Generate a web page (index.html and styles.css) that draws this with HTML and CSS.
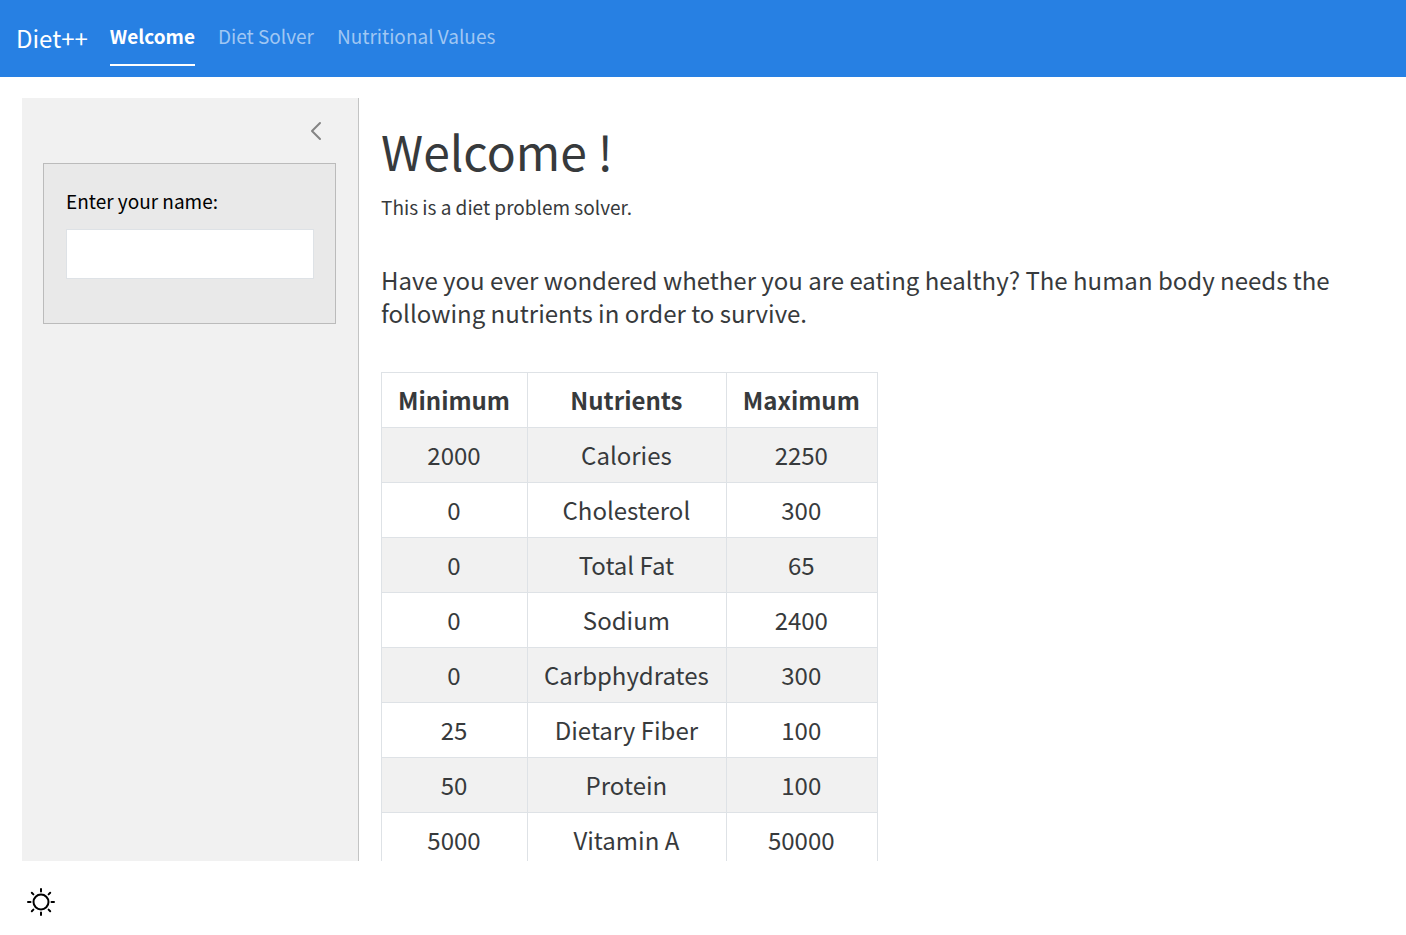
FILE: index.html
```html
<!DOCTYPE html>
<html lang="en">
<head>
<meta charset="utf-8">
<title>Diet++</title>
<link rel="stylesheet" href="styles.css">
</head>
<body>
<header class="navbar">
  <a class="brand" href="#">Diet++</a>
  <nav class="nav">
    <a class="nav-link active" href="#welcome">Welcome</a>
    <a class="nav-link" href="#solver">Diet Solver</a>
    <a class="nav-link" href="#values">Nutritional Values</a>
  </nav>
</header>
<div class="layout">
  <aside class="sidebar">
    <button class="collapse" type="button" aria-label="Toggle sidebar">
      <svg width="22" height="22" viewBox="0 0 22 22" fill="none" stroke="currentColor" stroke-width="2" stroke-linecap="round" stroke-linejoin="round"><path d="M15 3 7 11l8 8"/></svg>
    </button>
    <form class="well">
      <label for="name">Enter your name:</label>
      <input id="name" type="text">
    </form>
  </aside>
  <main class="main">
    <h1>Welcome !</h1>
    <p class="intro">This is a diet problem solver.</p>
    <p class="lead">Have you ever wondered whether you are eating healthy? The human body needs the following nutrients in order to survive.</p>
    <table>
      <thead><tr><th>Minimum</th><th>Nutrients</th><th>Maximum</th></tr></thead>
      <tbody>
        <tr><td>2000</td><td>Calories</td><td>2250</td></tr>
        <tr><td>0</td><td>Cholesterol</td><td>300</td></tr>
        <tr><td>0</td><td>Total Fat</td><td>65</td></tr>
        <tr><td>0</td><td>Sodium</td><td>2400</td></tr>
        <tr><td>0</td><td>Carbphydrates</td><td>300</td></tr>
        <tr><td>25</td><td>Dietary Fiber</td><td>100</td></tr>
        <tr><td>50</td><td>Protein</td><td>100</td></tr>
        <tr><td>5000</td><td>Vitamin A</td><td>50000</td></tr>
      </tbody>
    </table>
  </main>
</div>
<footer class="footer">
  <button class="mode" type="button" aria-label="Toggle dark mode">
    <svg width="32" height="32" viewBox="0 0 32 32" fill="none" stroke="currentColor" stroke-width="2" stroke-linecap="round"><circle cx="16" cy="16" r="7.500"/><path d="M16 3v2.500M16 26.500v2.500M3 16h2.500M26.500 16h2.500M6.800 6.800l1.600 1.600M23.600 23.600l1.600 1.600M25.200 6.800l-1.600 1.600M8.400 23.600l-1.600 1.600"/></svg>
  </button>
</footer>
</body>
</html>
```
FILE: styles.css
```css
* { box-sizing: border-box; }
body {
  margin: 0;
  height: 100vh;
  display: flex;
  flex-direction: column;
  background: #fff;
  color: #373a3c;
  font-family: "Noto Sans CJK SC", "Noto Sans", sans-serif;
  font-size: 19px;
  line-height: 28px;
}
.navbar {
  display: flex;
  align-items: center;
  gap: 22px;
  padding: 0 16px 2px;
  height: 77px;
  flex: none;
  background: #2780e3;
}
.brand { color: #fff; font-size: 24px; text-decoration: none; }
.nav { display: flex; gap: 23px; }
.nav-link {
  padding: 12px 0 14px;
  border-bottom: 2px solid transparent;
  color: #a0c7f3;
  text-decoration: none;
}
.nav-link.active { color: #fff; font-weight: 700; border-color: #fff; }
.layout {
  flex: 1;
  min-height: 0;
  display: flex;
  margin: 21px 22px 0;
  overflow: hidden;
}
.sidebar {
  width: 337px;
  flex: none;
  padding: 22px 22px 22px 21px;
  background: #f1f1f1;
  border-right: 1px solid #c3c4c4;
}
.collapse, .mode { display: block; padding: 0; border: 0; background: none; color: #000; }
.collapse { margin: 0 9px 21px auto; color: #848484; }
.collapse svg, .mode svg { display: block; }
.well {
  padding: 23px 21px 44px 22px;
  background: #e9e9e9;
  border: 1px solid #bbb;
}
.well label { display: block; margin-bottom: 14px; color: #000; }
.well input { display: block; width: 100%; height: 50px; padding: 8px 16px; border: 1px solid #dee2e6; background: #fff; font: inherit; }
.main { flex: 1; min-width: 0; padding: 20px 22px; }
h1 { margin: 0 0 11px; font-size: 48px; line-height: 64px; font-weight: 400; }
p { margin: 0; }
.lead, table { font-size: 24px; line-height: 33px; }
.lead { margin: 42px 0 43px; }
table { border-collapse: collapse; text-align: center; }
th, td { padding: 10px 17px 11px 16px; border: 1px solid #dee2e6; }
tbody tr:nth-child(odd) { background: #f1f1f1; }
.footer { flex: none; height: 74px; padding: 25px; }
```
